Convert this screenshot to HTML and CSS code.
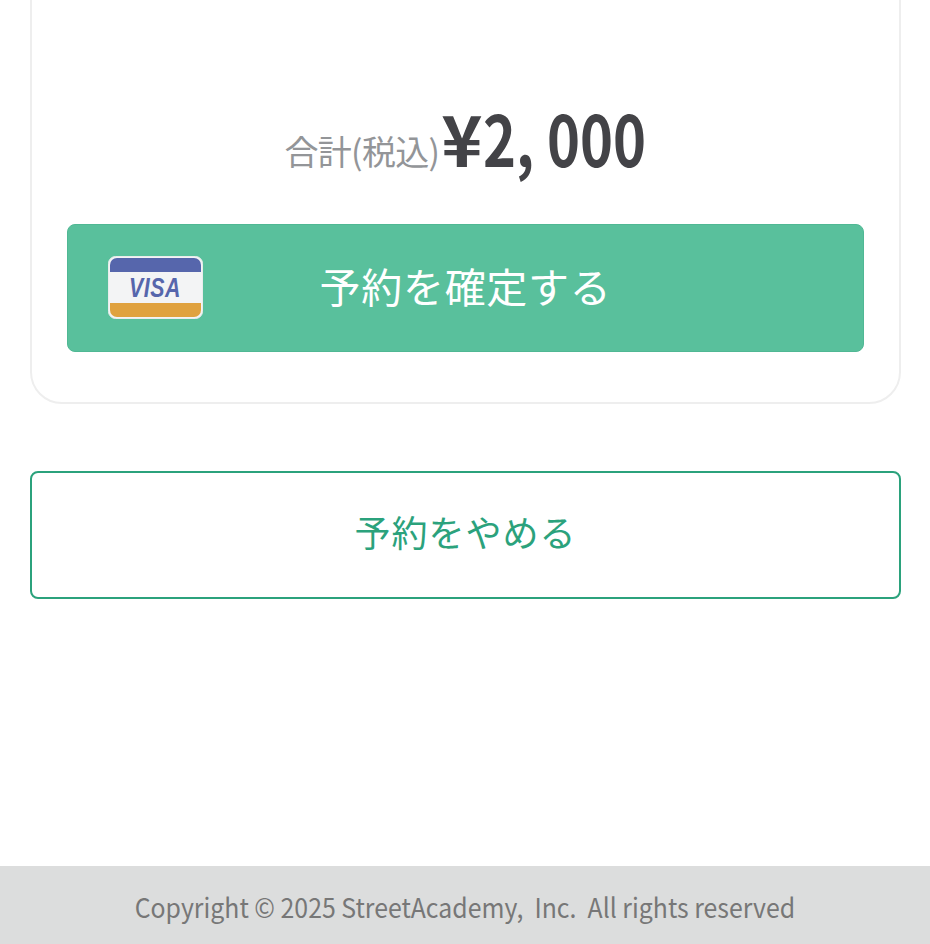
FILE: index.html
```html
<!DOCTYPE html>
<html lang="ja">
<head>
    <meta charset="UTF-8">
    <meta name="viewport" content="width=device-width, initial-scale=1.0">
    <title>予約の確認</title>
    <link rel="stylesheet" href="styles.css">
</head>
<body>
    <div class="page">
        <div class="card">
            <div class="total">
                <span class="total-label">合計(税込)</span><span class="total-yen">¥</span><span class="total-amount">2, 000</span>
            </div>
            <button class="confirm-button">
                <svg class="visa-icon" width="95" height="63" viewBox="0 0 95 63">
                    <rect x="0.5" y="0.5" width="94" height="62" rx="7" fill="#f3f4f5" stroke="#e9ecec"/>
                    <path d="M2 16V9a7 7 0 0 1 7-7h77a7 7 0 0 1 7 7v7z" fill="#5666ac"/>
                    <path d="M2 47v7a7 7 0 0 0 7 7h77a7 7 0 0 0 7-7v-7z" fill="#e0a23f"/>
                    <text x="47" y="41" class="visa-text" textLength="52" lengthAdjust="spacingAndGlyphs">VISA</text>
                </svg>
                <span>予約を確定する</span>
            </button>
        </div>
        <button class="cancel-button">予約をやめる</button>
    </div>
    <div class="footer"><span class="footer-text">Copyright © 2025 StreetAcademy,&nbsp; Inc.&nbsp; All rights reserved</span></div>
</body>
</html>
```

FILE: styles.css
```css
* {
    margin: 0;
    padding: 0;
    box-sizing: border-box;
}

body {
    font-family: "Noto Sans CJK JP", "Noto Sans", sans-serif;
    background-color: #fff;
    height: 944px;
    overflow: hidden;
    display: flex;
    flex-direction: column;
}

.page {
    flex: 1;
    padding: 0 29px 0 30px;
}

.card {
    margin-top: -40px;
    height: 444px;
    padding: 128px 35px 0;
    border: 2px solid #eeeeee;
    border-radius: 32px;
    display: flex;
    flex-direction: column;
}

.total {
    display: flex;
    align-items: baseline;
    justify-content: center;
    height: 89px;
    margin-bottom: 45px;
    line-height: 89px;
}

.total-label {
    margin-right: 2px;
    font-size: 34px;
    color: #939598;
    letter-spacing: -0.7px;
}

.total-yen,
.total-amount {
    display: inline-block;
    font-size: 70px;
    font-weight: 700;
    color: #434347;
}

.total-yen {
    transform: translateY(2px);
}

.total-amount {
    margin-right: -40px;
    white-space: pre;
    transform-origin: left;
    transform: translateY(2px) scaleX(0.8);
}

.confirm-button {
    position: relative;
    height: 128px;
    padding-bottom: 6px;
    border: 1px solid #50b894;
    border-radius: 8px;
    background-color: #59c09c;
    color: #fff;
    font-family: inherit;
    font-size: 41px;
    letter-spacing: 0.7px;
}

.visa-icon {
    position: absolute;
    left: 40px;
    top: 31px;
}

.visa-text {
    font-family: "Liberation Sans", sans-serif;
    font-size: 27px;
    font-weight: 700;
    font-style: italic;
    fill: #5666ac;
    text-anchor: middle;
}

.cancel-button {
    display: block;
    width: 100%;
    height: 128px;
    margin-top: 67px;
    padding-bottom: 8px;
    border: 2px solid #2ba27c;
    border-radius: 8px;
    background-color: #fff;
    color: #2ba27c;
    font-family: inherit;
    font-size: 36px;
    letter-spacing: 1px;
}

.footer {
    height: 78px;
    line-height: 82px;
    background-color: #dcdddd;
    color: #777;
    font-size: 27px;
    text-align: center;
}

.footer-text {
    display: inline-block;
    white-space: nowrap;
    transform: scaleX(0.92);
}
```
